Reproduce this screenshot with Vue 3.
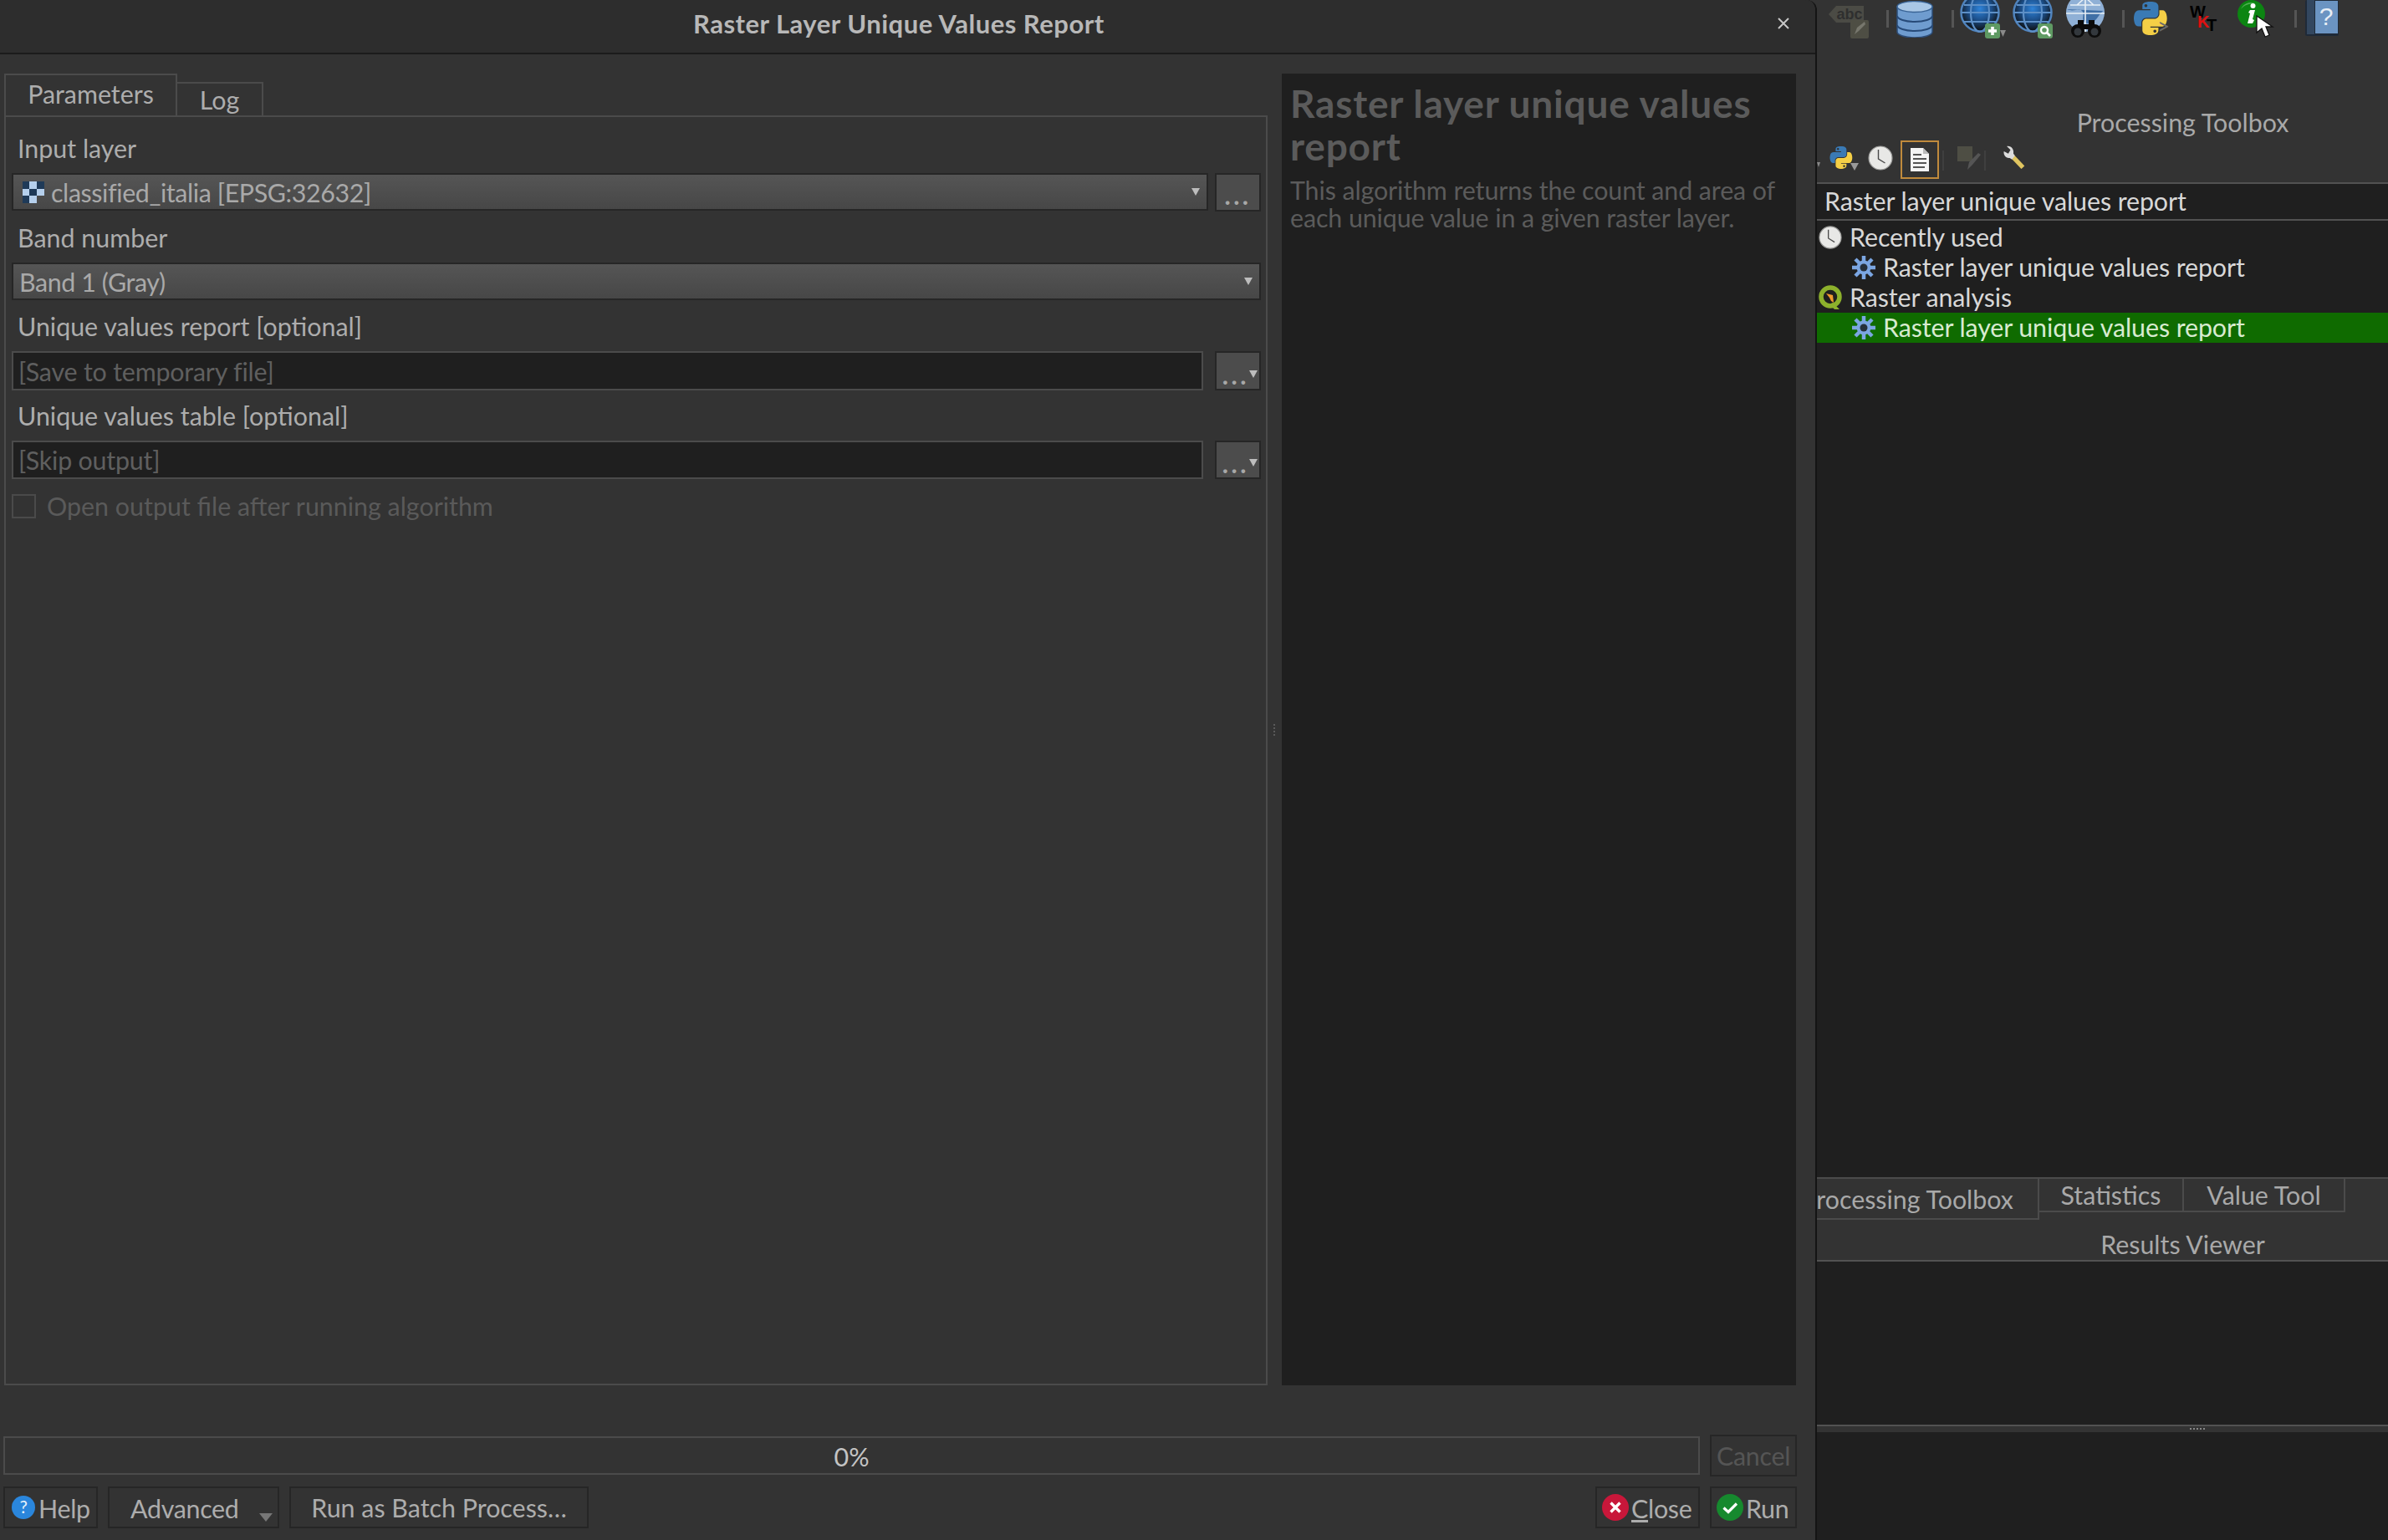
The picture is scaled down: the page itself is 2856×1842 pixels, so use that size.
<template>
  <div class="screen">
    <!-- shared icons -->
    <svg class="defs" width="0" height="0">
      <defs>
        <symbol id="python" viewBox="0 0 112 112">
          <path fill="#3a7ab5" d="M54.9 0C50.3 0 46 .4 42.1 1.1 30.8 3.1 28.7 7.3 28.7 15V25.3H55.5V28.7H18.6C10.8 28.7 4 33.3 1.9 42.3-.6 52.5-.7 58.8 1.9 69.4 3.8 77.3 8.3 82.9 16.1 82.9H25.3V70.7C25.3 61.9 33 54 42.1 54H68.9C76.4 54 82.3 47.9 82.3 40.3V15C82.3 7.8 76.2 2.4 68.9 1.1 64.3.3 59.5 0 54.9 0ZM40.4 8.3C43.2 8.3 45.4 10.6 45.4 13.4 45.4 16.2 43.2 18.5 40.4 18.5 37.6 18.5 35.4 16.2 35.4 13.4 35.4 10.6 37.6 8.3 40.4 8.3Z" />
          <path fill="#f5cf46" d="M85.6 28.7V40.6C85.6 49.8 77.8 57.6 68.9 57.6H42.1C34.8 57.6 28.7 63.8 28.7 71.2V96.7C28.7 104 35 108.3 42.1 110.3 50.6 112.8 58.8 113.3 68.9 110.3 75.7 108.4 82.3 104.4 82.3 96.7V86.5H55.5V83.1H95.7C103.5 83.1 106.4 77.6 109.1 69.5 111.9 61 111.8 53 109.1 42.3 107.2 34.5 103.5 28.7 95.7 28.7ZM70.6 93.7C73.4 93.7 75.6 95.9 75.6 98.8 75.6 101.6 73.4 103.9 70.6 103.9 67.8 103.9 65.6 101.6 65.6 98.8 65.6 95.9 67.8 93.7 70.6 93.7Z" />
        </symbol>
        <symbol id="clock" viewBox="0 0 30 30">
          <circle cx="15" cy="15" r="14" fill="#e8e8e6" stroke="#9a9a98" stroke-width="1.2" />
          <path d="M12.5 5v11l8 5" fill="none" stroke="#4a4a4a" stroke-width="1.4" />
        </symbol>
        <symbol id="gear" viewBox="0 0 30 30">
          <g stroke="#7ba6e2" stroke-width="4.500">
            <path d="M15 1v28M1 15h28M5 5l20 20M25 5L5 25" />
          </g>
          <circle cx="15" cy="15" r="8.500" fill="#7ba6e2" />
          <circle cx="15" cy="15" r="4.500" fill="#26303a" />
        </symbol>
        <symbol id="globe" viewBox="0 0 48 40">
          <defs>
            <radialGradient id="gl" cx="0.5" cy="0.4" r="0.55">
              <stop offset="0" stop-color="#2f83d8" />
              <stop offset="0.55" stop-color="#1c4f8a" />
              <stop offset="1" stop-color="#10171f" />
            </radialGradient>
          </defs>
          <circle cx="24" cy="15" r="22.500" fill="url(#gl)" stroke="#4f83bd" stroke-width="2.500" />
          <g fill="none" stroke="#5d8fc6" stroke-width="2.2">
            <path d="M5 6h38M1.500 15h45M4 26h40" />
            <ellipse cx="24" cy="15" rx="11" ry="23" />
          </g>
        </symbol>
      </defs>
    </svg>

    <section class="dialog">
      <header class="titlebar">
        <span class="title">Raster Layer Unique Values Report</span>
        <svg class="close-x" width="16" height="16" viewBox="0 0 16 16">
          <path d="M2 2l12 12M14 2L2 14" stroke="#c8c8c8" stroke-width="2" />
        </svg>
      </header>

      <div class="main">
        <div class="left">
          <div class="tabs">
            <div class="tab active">Parameters</div>
            <div class="tab">Log</div>
          </div>
          <div class="pane">
            <div class="field-label">Input layer</div>
            <div class="row row-a">
              <div class="combo grow">
                <svg class="layer-icon" width="27" height="26" viewBox="0 0 3 3" shape-rendering="crispEdges">
                  <rect x="1" width="1" height="1" fill="#b5cfec" />
                  <rect width="1" height="1" fill="#1f3a58" />
                  <rect x="2" width="1" height="1" fill="#1f3a58" />
                  <rect y="1" width="1" height="1" fill="#b5cfec" />
                  <rect x="1" y="1" width="1" height="1" fill="#1f3a58" />
                  <rect x="2" y="1" width="1" height="1" fill="#b5cfec" />
                  <rect y="2" width="1" height="1" fill="#1f3a58" />
                  <rect x="1" y="2" width="1" height="1" fill="#b5cfec" />
                </svg>
                <span>classified_italia [EPSG:32632]</span>
                <i class="arrow"></i>
              </div>
              <div class="dots-btn"><span class="dots">...</span></div>
            </div>

            <div class="field-label">Band number</div>
            <div class="row row-b">
              <div class="combo grow band">
                <span>Band 1 (Gray)</span>
                <i class="arrow"></i>
              </div>
            </div>

            <div class="field-label">Unique values report [optional]</div>
            <div class="row row-c">
              <div class="line-input grow">[Save to temporary file]</div>
              <div class="dots-btn menu"><span class="dots">...</span><i class="arrow"></i></div>
            </div>

            <div class="field-label tight">Unique values table [optional]</div>
            <div class="row row-a">
              <div class="line-input grow">[Skip output]</div>
              <div class="dots-btn menu"><span class="dots">...</span><i class="arrow"></i></div>
            </div>

            <label class="check">
              <span class="box"></span>
              <span>Open output file after running algorithm</span>
            </label>
          </div>
        </div>

        <div class="splitter"><i></i></div>

        <aside class="help-panel">
          <h2>Raster layer unique values report</h2>
          <p>This algorithm returns the count and area of each unique value in a given raster layer.</p>
        </aside>
      </div>

      <div class="progress-row">
        <div class="progress">0%</div>
        <div class="btn cancel">Cancel</div>
      </div>

      <footer class="buttons">
        <div class="btn help">
          <svg width="28" height="28" viewBox="0 0 28 28">
            <circle cx="14" cy="14" r="14" fill="#2a86dc" />
            <text x="14" y="21" text-anchor="middle" class="qmark">?</text>
          </svg>
          <span>Help</span>
        </div>
        <div class="btn advanced">
          <span>Advanced</span>
          <i class="arrow big"></i>
        </div>
        <div class="btn batch">Run as Batch Process…</div>
        <div class="spacer"></div>
        <div class="btn close">
          <svg width="32" height="32" viewBox="0 0 32 32">
            <circle cx="16" cy="16" r="16" fill="#c8173a" />
            <path d="M10.5 10.5l11 11M21.5 10.5l-11 11" stroke="#fff" stroke-width="3.4" />
          </svg>
          <span><u>C</u>lose</span>
        </div>
        <div class="btn run">
          <svg width="32" height="32" viewBox="0 0 32 32">
            <circle cx="16" cy="16" r="16" fill="#16892e" />
            <path d="M8.5 16.5l5.5 5 10-10" fill="none" stroke="#fff" stroke-width="3.2" />
          </svg>
          <span>Run</span>
        </div>
      </footer>
    </section>

    <section class="dock">
      <div class="tools">
        <svg class="t-abc" width="48" height="46" viewBox="0 0 48 46">
          <path d="M0 17L9 7h33v20H9z" fill="#4b4b45" />
          <text x="25" y="23" text-anchor="middle" class="abc">abc</text>
          <rect x="26" y="24" width="22" height="22" rx="2" fill="#4e4e44" />
          <path d="M31 41l3-8 9-7 1 3-8 8z" fill="#77776d" />
        </svg>
        <i class="sep s1"></i>
        <svg class="t-db" width="44" height="44" viewBox="0 0 44 44">
          <path d="M1 7v30c0 4 10 7 21 7s21-3 21-7V7z" fill="#6f9ccf" stroke="#2d4d78" stroke-width="1.5" />
          <ellipse cx="22" cy="7" rx="21" ry="6.5" fill="#a9c7e6" stroke="#3a6496" stroke-width="1.5" />
          <path d="M1 18c0 4 10 7 21 7s21-3 21-7M1 29c0 4 10 7 21 7s21-3 21-7" fill="none" stroke="#274a78" stroke-width="2" />
        </svg>
        <i class="sep s2"></i>
        <div class="globe-wrap g1">
          <svg width="48" height="40"><use href="#globe" /></svg>
          <svg class="badge" width="26" height="20" viewBox="0 0 26 20">
            <rect width="18" height="18" rx="3" fill="#5f9a63" />
            <path d="M9 4v10M4 9h10" stroke="#fff" stroke-width="3.6" />
            <path d="M18 8h7l-3.500 8z" fill="#8a8a8a" />
          </svg>
        </div>
        <div class="globe-wrap g2">
          <svg width="48" height="40"><use href="#globe" /></svg>
          <svg class="badge" width="18" height="18" viewBox="0 0 18 18">
            <rect width="18" height="18" rx="3" fill="#5f9a63" />
            <circle cx="8" cy="8" r="4" fill="none" stroke="#fff" stroke-width="2.4" />
            <path d="M11 11l4 4" stroke="#fff" stroke-width="2.6" />
          </svg>
        </div>
        <svg class="t-search" width="50" height="46" viewBox="0 0 50 46">
          <circle cx="24" cy="15" r="23" fill="#8fb0d6" />
          <path d="M2 11c8 4 14-2 18 2s-2 10 4 14 12-2 16-8 6-6 6-6" fill="#3f6fa6" />
          <path d="M6 6h36M1 16h46M24-8v46M14 6l10-9 10 9" fill="none" stroke="#e8eff6" stroke-width="1.600" />
          <g fill="#0b0b0b">
            <path d="M15 24h7v12h-7zM28 24h7v12h-7zM22 29h6v6h-6z" />
            <circle cx="15" cy="37" r="8" fill="#0c0c0c" />
            <circle cx="35" cy="37" r="8" fill="#0c0c0c" />
          </g>
          <circle cx="15" cy="38" r="4.500" fill="#33383d" />
          <circle cx="35" cy="38" r="4.500" fill="#33383d" />
        </svg>
        <i class="sep s3"></i>
        <div class="python-wrap">
          <svg width="40" height="40"><use href="#python" /></svg>
          <span class="prompt">&gt;</span>
        </div>
        <svg class="t-wkt" width="36" height="36" viewBox="0 0 36 36">
          <text x="0" y="15" class="wkt">W</text>
          <text x="9" y="27" class="wkt red">K</text>
          <text x="20" y="31" class="wkt">T</text>
        </svg>
        <div class="info-wrap">
          <svg width="33" height="33" viewBox="0 0 33 33">
            <circle cx="16.500" cy="16.500" r="16.500" fill="#0c8512" />
            <path d="M4 11a13 13 0 0 1 17-7c-7 0-13 2-17 7z" fill="#4fae52" />
            <circle cx="18.500" cy="7" r="3" fill="#fff" />
            <path d="M15 12h6l-3 11 2 1-2 4h-6l3-12-2-1z" fill="#fff" />
          </svg>
          <svg class="cursor" width="26" height="28" viewBox="0 0 26 28">
            <path d="M1 1v20l6-5 4 10 5-2-4-10h8z" fill="#fff" stroke="#111" stroke-width="1.3" />
          </svg>
        </div>
        <i class="sep s4"></i>
        <svg class="t-book" width="40" height="43" viewBox="0 0 40 43">
          <rect width="40" height="43" rx="2" fill="#1f2a38" />
          <rect x="2" width="9" height="41" fill="#33475f" />
          <rect x="12" y="1" width="27" height="39" fill="#6b94c2" />
          <text x="25" y="30" text-anchor="middle" class="book">?</text>
        </svg>
      </div>

      <div class="dock-title">Processing Toolbox</div>

      <div class="box-tools">
        <i class="overflow-arrow"></i>
        <svg class="p1" width="28" height="27"><use href="#python" width="28" height="27" /></svg>
        <i class="mini-arrow"></i>
        <svg class="p2" width="30" height="30"><use href="#clock" /></svg>
        <div class="doc-btn">
          <svg width="22" height="28" viewBox="0 0 22 28">
            <path d="M0 0h15l7 7v21H0z" fill="#f4f4f4" />
            <path d="M15 0v7h7" fill="#bbb" />
            <path d="M3 8h10M3 13h16M3 18h16M3 23h14" stroke="#555" stroke-width="1.800" />
          </svg>
        </div>
        <i class="thin-sep"></i>
        <svg class="p3" width="28" height="28" viewBox="0 0 28 28">
          <rect width="18" height="18" fill="#4e4e44" />
          <path d="M12 28l2-9 11-11 3 2-10 12z" fill="#555" />
        </svg>
        <i class="thin-sep"></i>
        <svg class="p4" width="30" height="28" viewBox="0 0 32 32">
          <path d="M11 11l18 19" stroke="#e0c560" stroke-width="6" />
          <path d="M7 1l5 5-3 5-6-3c-1 5 3 10 8 9l3 2 4-5-2-3c1-6-3-11-9-10z" fill="#dcdcdc" />
        </svg>
      </div>

      <div class="search"><span>Raster layer unique values report</span></div>

      <div class="tree">
        <div class="tree-row">
          <svg width="28" height="30"><use href="#clock" width="28" height="30" /></svg>
          <span>Recently used</span>
        </div>
        <div class="tree-row child">
          <svg width="30" height="30"><use href="#gear" /></svg>
          <span>Raster layer unique values report</span>
        </div>
        <div class="tree-row">
          <svg width="28" height="30" viewBox="0 0 28 30">
            <circle cx="14" cy="14" r="11" fill="none" stroke="#8db12c" stroke-width="5.500" />
            <path d="M17 21l8 8h-6l-6-6z" fill="#8db12c" />
            <path d="M9 10l8 2 1 9-3-2-2-4z" fill="#f09a2e" />
          </svg>
          <span>Raster analysis</span>
        </div>
        <div class="tree-row child selected">
          <svg width="30" height="30"><use href="#gear" /></svg>
          <span>Raster layer unique values report</span>
        </div>
      </div>

      <div class="dock-tabs">
        <div class="dock-tab current"><span>Processing Toolbox</span></div>
        <div class="dock-tab stats">Statistics</div>
        <div class="dock-tab value">Value Tool</div>
      </div>

      <div class="results-title">Results Viewer</div>
      <div class="results"></div>
      <div class="dock-split"><i></i></div>
      <div class="bottom"></div>
    </section>
  </div>
</template>

<script setup>
</script>

<style>
html,
body {
  margin: 0;
  background: #333333;
}
</style>

<style scoped>
.screen {
  width: 2856px;
  height: 1842px;
  display: flex;
  overflow: hidden;
  background: #333333;
  color: #adadad;
  font-family: "Lato", "Noto Sans", sans-serif;
  font-size: 30.4px;
}

.defs {
  position: absolute;
}

/* dialog */
.dialog {
  width: 2171px;
  height: 1842px;
  flex: none;
  box-sizing: content-box;
  border-right: 2px solid #141414;
  border-top-right-radius: 12px;
  display: flex;
  flex-direction: column;
}

.titlebar {
  height: 65px;
  flex: none;
  background: #2d2d2d;
  border-bottom: 2px solid #1b1b1b;
  border-top-right-radius: 12px;
  display: flex;
  align-items: center;
  padding-left: 829px;
  padding-bottom: 8px;
  box-sizing: border-box;
}

.title {
  color: #b8b8b8;
  font-weight: 700;
  font-size: 31px;
  letter-spacing: 0.5px;
}

.close-x {
  margin-left: auto;
  margin-right: 30px;
}

.main {
  display: flex;
  height: 1592px;
  padding-top: 23px;
  box-sizing: border-box;
  flex: none;
}

.left {
  width: 1511px;
  margin-left: 5px;
  display: flex;
  flex-direction: column;
}

.tabs {
  height: 50px;
  display: flex;
  align-items: flex-end;
}

.tab {
  box-sizing: border-box;
  height: 40px;
  width: 103px;
  border: 2px solid #4b4b4b;
  border-bottom: none;
  border-left: none;
  display: flex;
  align-items: center;
  justify-content: center;
}

.tab.active {
  height: 50px;
  width: 207px;
  border-left: 2px solid #4b4b4b;
  padding-bottom: 4px;
}

.pane {
  flex: 1;
  border: 2px solid #4b4b4b;
  box-sizing: border-box;
  padding: 20px 6px 0 7px;
}

.field-label {
  height: 36px;
  line-height: 34px;
  margin: 0 0 11px 7px;
}

.field-label.tight {
  margin-top: 13px;
}

.row {
  display: flex;
  margin-bottom: 14px;
  gap: 8px;
}

.row-a {
  height: 46px;
}

.row-b {
  height: 45px;
}

.row-c {
  height: 47px;
  margin-bottom: 12px;
}

.grow {
  flex: 1;
  min-width: 0;
}

.combo {
  box-sizing: border-box;
  background: linear-gradient(#555555, #474747);
  border: 2px solid #262626;
  height: 45px;
  display: flex;
  align-items: center;
  padding: 0 8px 0 10px;
  color: #a9a9a9;
  letter-spacing: -0.4px;
}

.combo.band {
  padding-left: 7px;
}

.layer-icon {
  margin-right: 8px;
  flex: none;
}

.combo .arrow {
  margin-left: auto;
}

.arrow {
  width: 0;
  height: 0;
  border-left: 5px solid transparent;
  border-right: 5px solid transparent;
  border-top: 9px solid #bdbdbd;
}

.arrow.big {
  border-left-width: 8px;
  border-right-width: 8px;
  border-top: 10px solid #777777;
}

.dots-btn {
  box-sizing: border-box;
  width: 55px;
  background: #4c4c4c;
  border: 2px solid #262626;
  display: flex;
  justify-content: center;
  align-items: flex-end;
  color: #a8a8a8;
  padding-bottom: 6px;
}

.dots {
  letter-spacing: 3.5px;
  line-height: 24px;
  font-weight: 700;
}

.dots-btn.menu {
  padding-bottom: 5px;
  justify-content: flex-end;
  padding-right: 2px;
  margin-left: 6px;
}

.dots-btn.menu .arrow {
  margin-bottom: 8px;
}

.line-input {
  box-sizing: border-box;
  background: #1f1f1f;
  border: 2px solid #4b4b4b;
  color: #5f5f5f;
  display: flex;
  align-items: center;
  padding-left: 6px;
  letter-spacing: -0.2px;
}

.check {
  height: 36px;
  display: flex;
  align-items: center;
  gap: 13px;
  color: #5a5a5a;
  margin-top: 13px;
}

.box {
  width: 29px;
  height: 29px;
  box-sizing: border-box;
  border: 2px solid #4a4a4a;
}

.splitter {
  width: 17px;
  flex: none;
  display: flex;
  align-items: center;
  justify-content: center;
  height: 1569px;
}

.splitter i {
  width: 2px;
  height: 14px;
  border-left: 2px dotted #5a5a5a;
}

.help-panel {
  width: 615px;
  height: 1569px;
  box-sizing: border-box;
  background: #1f1f1f;
  padding: 10px;
  color: #5b5b5b;
}

.help-panel h2 {
  margin: 0;
  font-size: 46px;
  letter-spacing: 0.8px;
  line-height: 51px;
  font-weight: 700;
}

.help-panel p {
  margin: 11px 0 0;
  line-height: 33px;
  letter-spacing: -0.1px;
}

.progress-row {
  height: 50px;
  margin-top: 59px;
  display: flex;
  align-items: center;
  padding: 0 22px 0 4px;
  gap: 12px;
  flex: none;
}

.progress {
  flex: 1;
  height: 46px;
  box-sizing: border-box;
  border: 2px solid #4b4b4b;
  padding-top: 2px;
  display: flex;
  align-items: center;
  justify-content: center;
  color: #c4c4c4;
}

.btn {
  box-sizing: border-box;
  border: 2px solid #262626;
  display: flex;
  align-items: center;
  height: 50px;
  letter-spacing: -0.3px;
}

.btn span {
  padding-top: 2px;
}

.cancel {
  width: 104px;
  justify-content: center;
  color: #555555;
}

.buttons {
  height: 50px;
  margin-top: 12px;
  padding: 0 22px 0 4px;
  display: flex;
  gap: 12px;
  flex: none;
}

.spacer {
  flex: 1;
}

.help {
  width: 113px;
  padding-left: 8px;
  gap: 4px;
}

.qmark {
  fill: #e8f2fb;
  font-size: 21px;
}

.advanced {
  width: 205px;
  padding-left: 25px;
}

.advanced .arrow {
  margin: 24px 6px 0 auto;
}

.batch {
  width: 358px;
  justify-content: center;
  letter-spacing: 0;
}

.close {
  width: 125px;
  padding-left: 6px;
  gap: 3px;
}

.run {
  width: 104px;
  padding-left: 6px;
  gap: 3px;
}

/* right dock */
.dock {
  flex: 1;
  min-width: 0;
  display: flex;
  flex-direction: column;
  color: #a9a9a9;
}

.tools {
  height: 128px;
  flex: none;
  display: flex;
  align-items: flex-start;
  padding-left: 14px;
}

.sep {
  width: 3px;
  height: 21px;
  margin-top: 12px;
  background: #555555;
  flex: none;
}

.s1 {
  margin-left: 21px;
}

.t-db {
  margin-left: 9px;
  margin-top: 1px;
}

.s2 {
  margin-left: 22px;
}

.globe-wrap {
  position: relative;
  width: 48px;
  height: 46px;
}

.g1 {
  margin-left: 7px;
}

.g2 {
  margin-left: 15px;
}

.badge {
  position: absolute;
  left: 30px;
  top: 28px;
}

.t-search {
  margin-left: 15px;
}

.s3 {
  margin-left: 18px;
}

.python-wrap {
  position: relative;
  margin-left: 11px;
  margin-top: 2px;
  width: 42px;
  height: 44px;
}

.prompt {
  position: absolute;
  left: 28px;
  top: 13px;
  color: #6a6a6a;
  font-size: 26px;
}

.t-wkt {
  margin-left: 25px;
  margin-top: 6px;
}

.wkt {
  font-family: "Liberation Sans", sans-serif;
  font-weight: 700;
  font-size: 20px;
  fill: #000;
}

.wkt.red {
  fill: #e01010;
}

.abc {
  font-family: "Liberation Sans", sans-serif;
  font-weight: 700;
  font-size: 18px;
  fill: #2f2f2f;
}

.book {
  font-family: "Liberation Sans", sans-serif;
  font-size: 30px;
  fill: #e8eef5;
}

.info-wrap {
  position: relative;
  margin-left: 21px;
  width: 33px;
  height: 46px;
}

.cursor {
  position: absolute;
  left: 22px;
  top: 18px;
}

.s4 {
  margin-left: 35px;
}

.t-book {
  margin-left: 10px;
}

.dock-title {
  height: 36px;
  line-height: 36px;
  text-align: center;
  flex: none;
  padding-left: 192px;
}

.box-tools {
  height: 54px;
  flex: none;
  display: flex;
  align-items: flex-start;
  padding-top: 4px;
  box-sizing: border-box;
}

.overflow-arrow {
  width: 0;
  height: 0;
  margin: 26px 0 0 0;
  border-left: 2px solid transparent;
  border-right: 2px solid transparent;
  border-top: 6px solid #888888;
}

.p1 {
  margin: 7px 0 0 11px;
  flex: none;
}

.mini-arrow {
  width: 0;
  height: 0;
  margin: 27px 0 0 -3px;
  border-left: 5px solid transparent;
  border-right: 5px solid transparent;
  border-top: 9px solid #999999;
}

.p2 {
  margin: 6px 0 0 11px;
}

.doc-btn {
  box-sizing: border-box;
  width: 46px;
  height: 46px;
  margin-left: 9px;
  border: 2px solid #c08a3c;
  display: flex;
  align-items: center;
  justify-content: center;
}

.thin-sep {
  width: 2px;
  height: 24px;
  margin: 12px 0 0 4px;
  background: #3f3f3f;
}

.p3 {
  margin: 7px 0 0 16px;
}

.thin-sep + .p4 {
  margin: 6px 0 0 18px;
}

.search {
  height: 46px;
  flex: none;
  box-sizing: border-box;
  background: #1f1f1f;
  border-top: 2px solid #525252;
  border-bottom: 2px solid #525252;
  display: flex;
  align-items: center;
  padding-left: 9px;
  padding-bottom: 2px;
  color: #d8d8d8;
  letter-spacing: -0.1px;
}

.tree {
  height: 1144px;
  flex: none;
  box-sizing: border-box;
  background: #1f1f1f;
  padding-top: 2px;
  color: #d8d8d8;
  letter-spacing: -0.1px;
}

.tree-row {
  height: 36px;
  display: flex;
  align-items: center;
  padding-left: 2px;
  gap: 9px;
}

.tree-row span {
  margin-top: -3px;
}

.tree-row.child {
  padding-left: 41px;
  gap: 8px;
}

.tree-row.selected {
  background: #0f6b00;
  color: #d8ecd0;
}

.dock-tabs {
  height: 51px;
  flex: none;
  display: flex;
  align-items: flex-start;
  background: #333333;
  border-top: 2px solid #4b4b4b;
  box-sizing: border-box;
}

.dock-tab {
  box-sizing: border-box;
  height: 40px;
  border: 2px solid #4b4b4b;
  border-top: none;
  border-left: none;
  display: flex;
  align-items: center;
  justify-content: center;
}

.dock-tab.current {
  width: 266px;
  height: 49px;
  justify-content: flex-end;
  padding-right: 29px;
  overflow: hidden;
  white-space: nowrap;
}

.dock-tab.current span {
  flex: none;
}

.dock-tab.stats {
  width: 173px;
}

.dock-tab.value {
  width: 193px;
}

.results-title {
  height: 48px;
  flex: none;
  text-align: center;
  line-height: 58px;
  padding-left: 192px;
}

.results {
  height: 197px;
  flex: none;
  background: #1f1f1f;
  border-top: 2px solid #525252;
  box-sizing: border-box;
}

.dock-split {
  height: 9px;
  flex: none;
  border-top: 2px solid #525252;
  box-sizing: border-box;
  display: flex;
  justify-content: center;
  align-items: center;
}

.dock-split i {
  width: 18px;
  height: 2px;
  margin-left: 226px;
  border-top: 2px dotted #888888;
}

.bottom {
  flex: 1;
  background: #1f1f1f;
}
</style>
